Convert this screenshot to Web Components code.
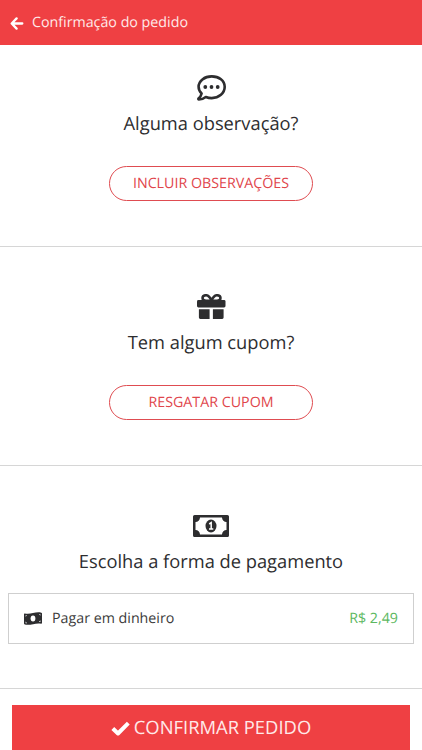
<!DOCTYPE html>
<html lang="pt-BR">
<head>
<meta charset="utf-8">
<title>Confirmação do pedido</title>
<style>
  html, body { height: 100%; }
  body {
    margin: 0;
    overflow: hidden;
    background: #fff;
    color: #2d2d2f;
    font-family: "Open Sans", "Noto Sans", sans-serif;
    text-rendering: geometricPrecision;
  }
</style>
</head>
<body>
<order-page>
  <app-header slot="header">Confirmação do pedido</app-header>

  <order-section style="--height: 202px">
    <app-icon slot="icon" name="comment"></app-icon>
    <span slot="title">Alguma observação?</span>
    <pill-button>INCLUIR OBSERVAÇÕES</pill-button>
  </order-section>

  <order-section style="--height: 219px">
    <app-icon slot="icon" name="gift"></app-icon>
    <span slot="title">Tem algum cupom?</span>
    <pill-button>RESGATAR CUPOM</pill-button>
  </order-section>

  <order-section style="--height: 223px; --gap: 18px; --bottom: 44px">
    <app-icon slot="icon" name="bill"></app-icon>
    <span slot="title">Escolha a forma de pagamento</span>
    <payment-option>
      <app-icon slot="icon" name="cash"></app-icon>
      Pagar em dinheiro
      <span slot="price">R$ 2,49</span>
    </payment-option>
  </order-section>

  <confirm-button slot="footer">CONFIRMAR PEDIDO</confirm-button>
</order-page>

<script>
const ICONS = {
  back: {
    width: 14, height: 13,
    body: `<path d="M6.600 1.400 1.700 6.500 6.600 11.600M2 6.500H12.300" fill="none" stroke="currentColor" stroke-width="2.300" stroke-linecap="round" stroke-linejoin="round"/>`
  },
  comment: {
    width: 29, height: 26,
    body: `
      <path d="M14.700 1.400C7.400 1.400 1.600 6 1.600 11.800c0 2.600 1.100 4.900 3 6.700-.4 1.900-1.500 3.700-3.100 5.100-.3.400-.1.900.4.900 2.800 0 5.100-1.100 6.900-2.500 1.800.7 3.800 1.100 5.900 1.100 7.300 0 13-4.900 13-11.300S22 1.400 14.700 1.400Z" fill="none" stroke="currentColor" stroke-width="2.600" stroke-linejoin="round"/>
      <circle cx="8.300" cy="12" r="1.900"/>
      <circle cx="14.500" cy="12" r="1.900"/>
      <circle cx="20.700" cy="12" r="1.900"/>`
  },
  gift: {
    width: 29, height: 26,
    body: `
      <path d="M14.500 6.500C13.200 3.600 11.300 1.200 9 1.200 7 1.200 5.500 2.300 5.500 4S7 6.700 9 6.700ZM14.500 6.500C15.800 3.600 17.700 1.200 20 1.200c2 0 3.500 1.100 3.500 2.800s-1.500 2.700-3.500 2.700Z" fill="none" stroke="currentColor" stroke-width="2.500"/>
      <rect x="0" y="6" width="28.500" height="7.500" rx="1.400"/>
      <path d="M1.900 15.200H12.600V25H3.300a1.400 1.400 0 0 1-1.400-1.400ZM15.900 15.200H26.600v8.400a1.400 1.400 0 0 1-1.400 1.400H15.900Z"/>`
  },
  bill: {
    width: 36, height: 22,
    body: `
      <path fill-rule="evenodd" d="M1.600 0H34.400A1.600 1.600 0 0 1 36 1.600V20.400A1.600 1.600 0 0 1 34.400 22H1.600A1.600 1.600 0 0 1 0 20.400V1.600A1.600 1.600 0 0 1 1.600 0ZM7 2.600A4.500 4.500 0 0 1 2.500 7V15A4.500 4.500 0 0 1 7 19.400H29A4.500 4.500 0 0 1 33.500 15V7A4.500 4.500 0 0 1 29 2.600Z"/>
      <ellipse cx="18" cy="11" rx="5.500" ry="6.500"/>
      <path d="M16.200 9 18.200 7.700V13.500M16 14.100H20.300" fill="none" stroke="#fff" stroke-width="1.500"/>`
  },
  cash: {
    width: 18, height: 13,
    body: `
      <path d="M.7 1.400C6.500 3 11.500-.9 17.300.7q.7.200.7.900V10.800q0 .8-.8.900C11.500 10.500 6.500 13.800.8 12.500Q0 12.300 0 11.600V2Q0 1.300.7 1.400Z"/>
      <ellipse cx="9" cy="6.500" rx="2.400" ry="3" fill="#fff"/>
      <path d="M1.600 3.300h1.500L1.600 4.800ZM16.400 2.200v1.600L14.900 2ZM1.600 9.500 3.100 11.200H1.600ZM16.400 8.300v1.600H14.900Z" fill="#fff"/>`
  },
  check: {
    width: 19, height: 15,
    body: `<path d="M1.800 7.500 7 12.500 17.300 2.200" fill="none" stroke="currentColor" stroke-width="4" stroke-linejoin="round"/>`
  }
};

class AppIcon extends HTMLElement {
  constructor() {
    super();
    this.attachShadow({ mode: 'open' });
  }

  connectedCallback() {
    const icon = ICONS[this.getAttribute('name')];
    this.shadowRoot.innerHTML = `
      <style>
        :host { display: inline-flex; flex: none; }
        svg { display: block; fill: currentColor; }
      </style>
      <svg width="${icon.width}" height="${icon.height}" viewBox="0 0 ${icon.width} ${icon.height}" aria-hidden="true">${icon.body}</svg>
    `;
  }
}

class OrderPage extends HTMLElement {
  constructor() {
    super();
    this.attachShadow({ mode: 'open' });
    this.shadowRoot.innerHTML = `
      <style>
        :host { display: flex; flex-direction: column; height: 100vh; overflow: hidden; }
        main { flex: none; }
        footer { flex: 1; display: flex; padding: 16px 12px 0; }
      </style>
      <slot name="header"></slot>
      <main><slot></slot></main>
      <footer><slot name="footer"></slot></footer>
    `;
  }
}

class AppHeader extends HTMLElement {
  constructor() {
    super();
    this.attachShadow({ mode: 'open' });
    this.shadowRoot.innerHTML = `
      <style>
        :host {
          display: flex;
          flex: none;
          align-items: center;
          gap: 8px;
          box-sizing: border-box;
          height: 45px;
          padding: 1px 10px 0;
          background: #ef4043;
          color: #fff;
          font-size: 14.25px;
          line-height: 20px;
        }
        span { color: #ffe9e9; }
      </style>
      <app-icon name="back"></app-icon>
      <span><slot></slot></span>
    `;
  }
}

class OrderSection extends HTMLElement {
  constructor() {
    super();
    this.attachShadow({ mode: 'open' });
    this.shadowRoot.innerHTML = `
      <style>
        :host {
          display: flex;
          flex-direction: column;
          align-items: center;
          box-sizing: border-box;
          height: var(--height);
          padding: 0 8px;
          border-bottom: 1px solid #d6d6d6;
        }
        .icon { display: flex; align-items: center; height: 26px; margin-top: auto; }
        h2 {
          margin: 10px 0 var(--gap, 29px);
          font-size: 18.3px;
          font-weight: 400;
          line-height: 26px;
        }
        .content { display: flex; justify-content: center; width: 100%; margin-bottom: var(--bottom, 45px); }
      </style>
      <div class="icon"><slot name="icon"></slot></div>
      <h2><slot name="title"></slot></h2>
      <div class="content"><slot></slot></div>
    `;
  }
}

class PillButton extends HTMLElement {
  constructor() {
    super();
    this.attachShadow({ mode: 'open' });
    this.shadowRoot.innerHTML = `
      <style>
        :host { display: block; }
        button {
          width: 204px;
          height: 35px;
          padding: 1px 0 0;
          border: 1px solid #df4c51;
          border-radius: 18px;
          background: #fff;
          color: #df464c;
          font: 14.25px/20px "Open Sans", "Noto Sans", sans-serif;
          text-rendering: inherit;
        }
      </style>
      <button type="button"><slot></slot></button>
    `;
  }
}

class PaymentOption extends HTMLElement {
  constructor() {
    super();
    this.attachShadow({ mode: 'open' });
    this.shadowRoot.innerHTML = `
      <style>
        :host {
          display: flex;
          flex: 1;
          align-items: center;
          box-sizing: border-box;
          height: 51px;
          padding: 0 15px;
          border: 1px solid #cfcfcf;
          color: #3b3b3b;
          font-size: 14.25px;
          line-height: 20px;
        }
        .label { flex: 1; margin-left: 10px; }
        .price { color: #5cb860; }
        ::slotted(app-icon) { color: #2d2d2f; }
      </style>
      <slot name="icon"></slot>
      <span class="label"><slot></slot></span>
      <span class="price"><slot name="price"></slot></span>
    `;
  }
}

class ConfirmButton extends HTMLElement {
  constructor() {
    super();
    this.attachShadow({ mode: 'open' });
    this.shadowRoot.innerHTML = `
      <style>
        :host { display: flex; flex: 1; }
        button {
          display: flex;
          flex: 1;
          align-items: center;
          justify-content: center;
          gap: 4px;
          height: 45px;
          padding: 1px 0 0;
          border: 0;
          background: #ef4043;
          color: #fff;
          font: 18.4px/26px "Open Sans", "Noto Sans", sans-serif;
          text-rendering: inherit;
        }
        span { color: #ffe9e9; }
      </style>
      <button type="button"><app-icon name="check"></app-icon><span><slot></slot></span></button>
    `;
  }
}

customElements.define('app-icon', AppIcon);
customElements.define('order-page', OrderPage);
customElements.define('app-header', AppHeader);
customElements.define('order-section', OrderSection);
customElements.define('pill-button', PillButton);
customElements.define('payment-option', PaymentOption);
customElements.define('confirm-button', ConfirmButton);
</script>
</body>
</html>
